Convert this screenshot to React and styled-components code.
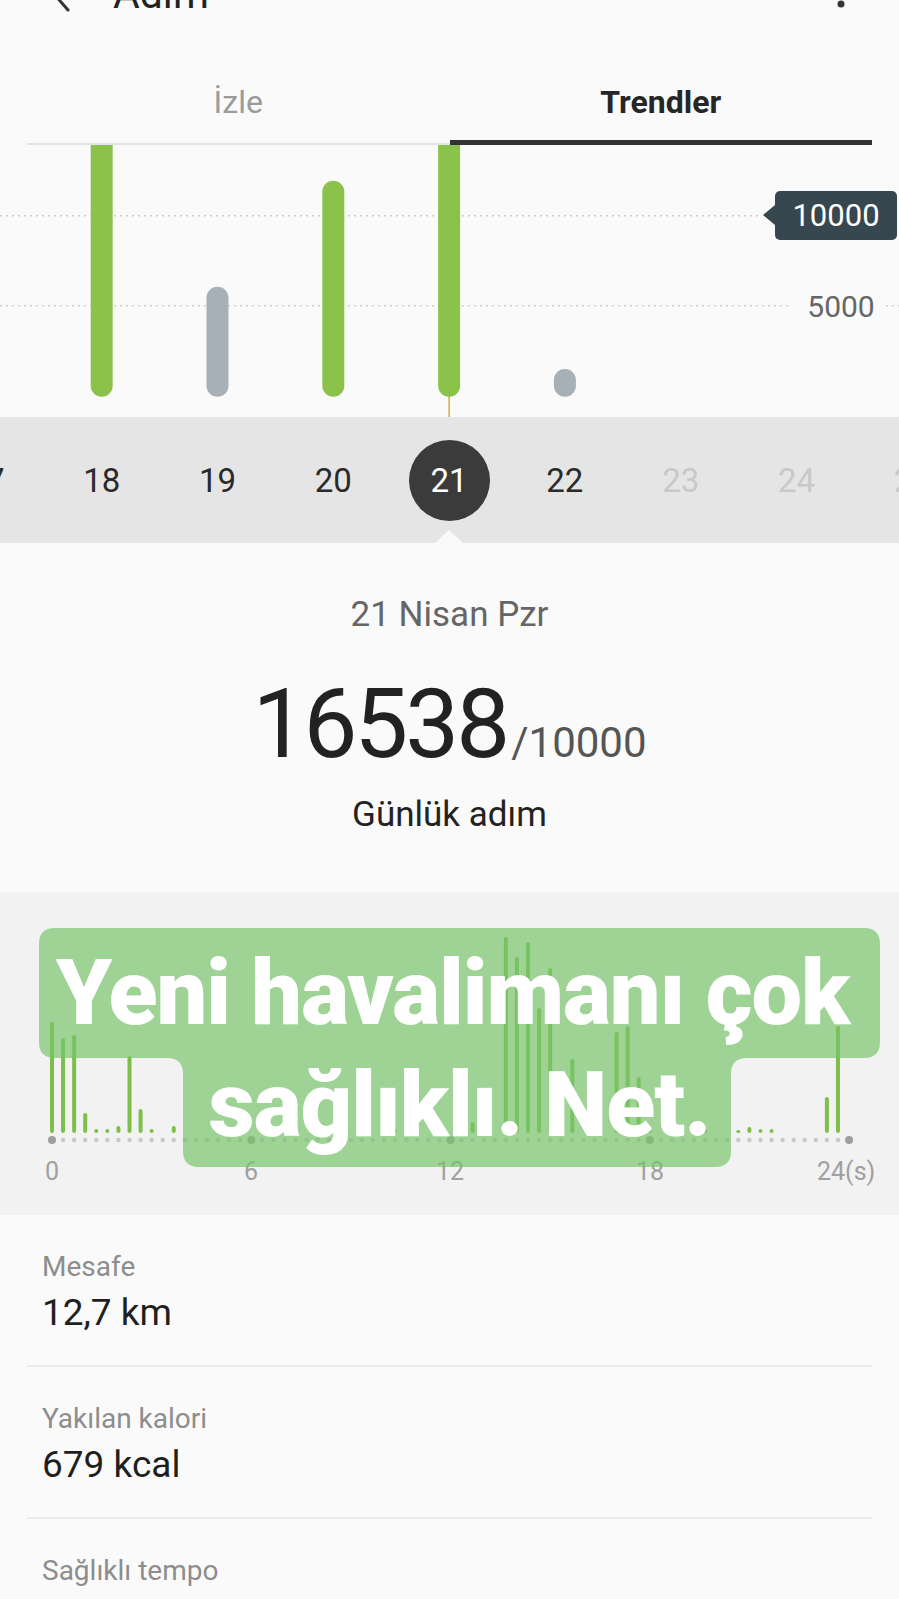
import React from "react";
import styled, { createGlobalStyle } from "styled-components";

const GlobalStyle = createGlobalStyle`
  html, body {
    margin: 0;
    padding: 0;
    background: #fafafa;
    overflow: hidden;
  }
  body {
    font-family: Roboto, "Noto Sans", "Liberation Sans", sans-serif;
    color: #222;
  }
`;

// day columns of the trend strip (scrolled so that 21 sits in the middle)
const COL_W = 115.8;
const COL_START = -72;
const colCenter = (i) => COL_START + COL_W * (i + 0.5);

const DAYS = [
  { d: 17 },
  { d: 18, top: -20, done: true },
  { d: 19, top: 141.7 },
  { d: 20, top: 35.7, done: true },
  { d: 21, top: -20, done: true, selected: true },
  { d: 22, top: 224 },
  { d: 23, future: true },
  { d: 24, future: true },
  { d: 25, future: true },
];

const BAR_BOTTOM = 251.7;

// hourly steps, [slot (20 min), top y]
const HOURLY = [
  [0, 130], [1, 146], [2, 143], [3, 221], [4, 237], [5, 237], [6, 234],
  [7, 164], [8, 217], [9, 237], [11, 234], [31, 237], [38, 230],
  [41, 45], [42, 65], [43, 50], [44, 116], [45, 76], [46, 228], [47, 167],
  [51, 140], [52, 134], [53, 185], [54, 236], [59, 237], [62, 238],
  [63, 235], [64, 237], [65, 237], [70, 205], [71, 134],
];

const AX_LEFT = 52;
const AX_STEP = 11.07;

const App = () => {
  return (
    <Page>
      <GlobalStyle />
      <TopBar>
        <svg width="22" height="36" viewBox="0 0 22 36">
          <polyline points="18,2 4,18 18,34" fill="none" stroke="#333" strokeWidth="3" strokeLinecap="round" strokeLinejoin="round" />
        </svg>
        <Title>Adım</Title>
        <MoreIcon width="8" height="36" viewBox="0 0 8 36">
          <circle cx="4" cy="4" r="3.5" fill="#333" />
          <circle cx="4" cy="16" r="3.5" fill="#333" />
          <circle cx="4" cy="28" r="3.5" fill="#333" />
        </MoreIcon>
      </TopBar>

      <Tabs>
        <Tab>İzle</Tab>
        <Tab $active>Trendler</Tab>
      </Tabs>

      <ChartArea>
        <svg width="899" height="272" viewBox="0 0 899 272">
          <line x1="0" x2="760" y1="70.7" y2="70.7" stroke="#cdcdcd" strokeWidth="1.6" strokeDasharray="2 4" />
          <line x1="0" x2="790" y1="160.7" y2="160.7" stroke="#cdcdcd" strokeWidth="1.6" strokeDasharray="2 4" />
          <line x1="886" x2="899" y1="160.7" y2="160.7" stroke="#cdcdcd" strokeWidth="1.6" strokeDasharray="2 4" />
          <line x1={colCenter(4)} x2={colCenter(4)} y1="240" y2="272" stroke="#d6ad45" strokeWidth="1.5" />
          {DAYS.map((day, i) =>
            day.top !== undefined ? (
              <rect
                key={day.d}
                x={colCenter(i) - 11}
                y={day.top}
                width="22"
                height={BAR_BOTTOM - day.top}
                rx="11"
                fill={day.done ? "#8bc34a" : "#a6b0b9"}
              />
            ) : null
          )}
          <text x="841" y="172" textAnchor="middle" fontSize="30" fill="#666" fontFamily="Roboto, sans-serif">5000</text>
        </svg>
        <GoalBadge>10000</GoalBadge>
      </ChartArea>

      <DateStrip>
        <DateRow>
          {DAYS.map((day) => (
            <DateCell key={day.d} $selected={day.selected} $future={day.future}>
              {day.d}
            </DateCell>
          ))}
        </DateRow>
      </DateStrip>

      <Summary>
        <DayLabel>21 Nisan Pzr</DayLabel>
        <StepLine>
          <Steps>16538</Steps>
          <Goal>/10000</Goal>
        </StepLine>
        <StepCaption>Günlük adım</StepCaption>
      </Summary>

      <HourlySection>
        <svg width="899" height="323" viewBox="0 0 899 323">
          {HOURLY.map(([slot, top]) => (
            <rect
              key={slot}
              x={AX_LEFT + slot * AX_STEP - 2}
              y={top}
              width="4"
              height={241 - top}
              rx="2"
              fill="#7cc04b"
            />
          ))}
          {Array.from({ length: 73 }, (_, i) => {
            const major = i % 18 === 0;
            return (
              <circle
                key={i}
                cx={AX_LEFT + i * AX_STEP}
                cy="248"
                r={major ? 4 : 2.2}
                fill={major ? "#9e9e9e" : "#c8c8c8"}
              />
            );
          })}
          <g fontFamily="Roboto, sans-serif" fontSize="25" fill="#a0a0a0">
            <text x="52" y="288" textAnchor="middle">0</text>
            <text x="251" y="288" textAnchor="middle">6</text>
            <text x="450" y="288" textAnchor="middle">12</text>
            <text x="650" y="288" textAnchor="middle">18</text>
            <text x="817" y="288">24(s)</text>
          </g>
        </svg>

        <Sticker>
          <StickerShape width="841" height="239" viewBox="0 0 841 239">
            <path
              d="M16,0 H825 Q841,0 841,16 V114 Q841,130 825,130 H708 Q692,130 692,146 V223 Q692,239 676,239 H160 Q144,239 144,223 V146 Q144,130 128,130 H16 Q0,130 0,114 V16 Q0,0 16,0 Z"
              fill="rgba(118, 196, 104, 0.68)"
            />
          </StickerShape>
          <StickerText>
            <StickerLine $shift={-7}>Yeni havalimanı çok</StickerLine>
            <StickerLine>sağlıklı. Net.</StickerLine>
          </StickerText>
        </Sticker>
      </HourlySection>

      <Stats>
        <StatRow>
          <StatLabel>Mesafe</StatLabel>
          <StatValue>12,7 km</StatValue>
        </StatRow>
        <StatRow>
          <StatLabel>Yakılan kalori</StatLabel>
          <StatValue>679 kcal</StatValue>
        </StatRow>
        <StatRow>
          <StatLabel>Sağlıklı tempo</StatLabel>
        </StatRow>
      </Stats>
    </Page>
  );
};

export default App;

const Page = styled.div`
  width: 899px;
  overflow: hidden;
  background: #fafafa;
`;

const TopBar = styled.header`
  height: 48px;
  margin-top: -30px;
  display: flex;
  align-items: center;
  padding: 0 54px 0 50px;
`;

const Title = styled.div`
  margin-left: 41px;
  font-size: 41px;
  line-height: 48px;
  color: #222;
`;

const MoreIcon = styled.svg`
  margin-left: auto;
`;

const Tabs = styled.div`
  display: grid;
  grid-template-columns: 1fr 1fr;
  padding: 0 27px;
`;

const Tab = styled.div`
  height: 127px;
  box-sizing: border-box;
  padding-top: 65px;
  text-align: center;
  font-size: 32px;
  line-height: 38px;
  font-weight: ${(p) => (p.$active ? 700 : 400)};
  color: ${(p) => (p.$active ? "#262626" : "#9a9a9a")};
  border-bottom: ${(p) => (p.$active ? "5px solid #333" : "2px solid #e4e4e4")};
`;

const ChartArea = styled.div`
  position: relative;
  height: 272px;
  overflow: hidden;

  svg {
    display: block;
  }
`;

const GoalBadge = styled.div`
  position: absolute;
  top: 46px;
  left: 775px;
  width: 122px;
  height: 49px;
  border-radius: 5px;
  background: #37474f;
  color: #fff;
  font-size: 31px;
  line-height: 49px;
  text-align: center;

  &::before {
    content: "";
    position: absolute;
    left: -12px;
    top: 14px;
    border-top: 10px solid transparent;
    border-bottom: 10px solid transparent;
    border-right: 12px solid #37474f;
  }
`;

const DateStrip = styled.div`
  position: relative;
  height: 126px;
  background: #e5e5e5;
  overflow: hidden;

  &::after {
    content: "";
    position: absolute;
    bottom: 0;
    left: ${colCenter(4) - 14}px;
    border-left: 14px solid transparent;
    border-right: 14px solid transparent;
    border-bottom: 13px solid #fafafa;
  }
`;

const DateRow = styled.div`
  display: grid;
  grid-template-columns: repeat(9, ${COL_W}px);
  margin-left: ${COL_START}px;
  height: 100%;
  align-items: center;
  justify-items: center;
`;

const DateCell = styled.div`
  width: 81px;
  height: 81px;
  border-radius: 50%;
  display: flex;
  align-items: center;
  justify-content: center;
  font-size: 33px;
  background: ${(p) => (p.$selected ? "#3b3b3b" : "transparent")};
  color: ${(p) => (p.$selected ? "#fff" : p.$future ? "#c9c9c9" : "#2a2a2a")};
`;

const Summary = styled.section`
  padding: 52px 0 57px;
  text-align: center;
`;

const DayLabel = styled.div`
  font-size: 35px;
  line-height: 40px;
  color: #666;
`;

const StepLine = styled.div`
  margin-top: 34px;
  height: 110px;
  display: flex;
  justify-content: center;
  align-items: baseline;
`;

const Steps = styled.span`
  font-size: 96px;
  line-height: 110px;
  letter-spacing: -3px;
  color: #222;
`;

const Goal = styled.span`
  font-size: 42px;
  line-height: 1;
  color: #555;
  margin-left: 4px;
`;

const StepCaption = styled.div`
  margin-top: 16px;
  font-size: 35px;
  line-height: 40px;
  color: #222;
`;

const HourlySection = styled.section`
  position: relative;
  height: 323px;
  background: #f2f2f2;

  > svg {
    display: block;
  }
`;

const Sticker = styled.div`
  position: absolute;
  top: 36px;
  left: 39px;
  width: 841px;
  height: 239px;
`;

const StickerShape = styled.svg`
  position: absolute;
  inset: 0;
`;

const StickerText = styled.div`
  position: relative;
  padding-top: 10px;
  text-align: center;
  font-size: 90px;
  line-height: 112px;
  font-weight: 900;
  letter-spacing: -1px;
  color: #fff;
  white-space: nowrap;
`;

const StickerLine = styled.div`
  transform: translateX(${(p) => p.$shift || 0}px);
`;

const Stats = styled.section`
  padding: 0 27px;
`;

const StatRow = styled.div`
  padding: 34px 15px 30px;
  border-bottom: 2px solid #ebebeb;
`;

const StatLabel = styled.div`
  font-size: 28px;
  line-height: 36px;
  color: #8d8d8d;
`;

const StatValue = styled.div`
  margin-top: 6px;
  font-size: 37px;
  line-height: 44px;
  color: #1f1f1f;
`;
